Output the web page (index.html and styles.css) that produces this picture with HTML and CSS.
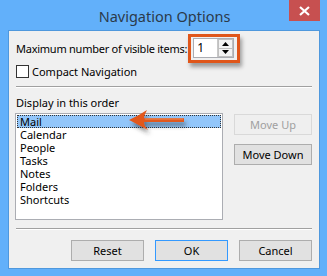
FILE: index.html
```html
<!DOCTYPE html>
<html>
<head>
<meta charset="utf-8">
<link rel="stylesheet" href="styles.css">
</head>
<body>
<div class="window">
  <div class="titlebar">
    <span></span>
    <div class="title">Navigation Options</div>
    <div class="close"><svg width="11" height="10" viewBox="0 0 11 10"><path d="M1 1 L10 9 M10 1 L1 9" stroke="#fff" stroke-width="2.2" fill="none"/></svg></div>
  </div>
  <div class="client">
    <div class="row-max">
      <span class="label max-label">Maximum number of visible items:</span>
      <div class="spin-highlight">
        <div class="spin">
          <span class="spin-value">1</span>
          <div class="spin-btns">
            <div class="spin-btn"><svg width="7" height="4" viewBox="0 0 7 4"><path d="M3.5 0 L7 4 L0 4 Z" fill="#000"/></svg></div>
            <div class="spin-btn"><svg width="7" height="4" viewBox="0 0 7 4"><path d="M0 0 L7 0 L3.5 4 Z" fill="#000"/></svg></div>
          </div>
        </div>
      </div>
    </div>
    <div class="row-check">
      <span class="checkbox"></span>
      <span class="label">Compact Navigation</span>
    </div>
    <div class="sep sep-top"></div>
    <div class="label order-label">Display in this order</div>
    <div class="order">
      <div class="listbox">
        <div class="item selected">Mail</div>
        <div class="item">Calendar</div>
        <div class="item">People</div>
        <div class="item">Tasks</div>
        <div class="item">Notes</div>
        <div class="item">Folders</div>
        <div class="item">Shortcuts</div>
        <svg class="arrow" width="80" height="36" viewBox="0 0 80 36">
          <defs>
            <filter id="sh" x="-20%" y="-40%" width="150%" height="200%">
              <feDropShadow dx="2" dy="4" stdDeviation="2" flood-color="#333" flood-opacity="0.55"/>
            </filter>
          </defs>
          <path filter="url(#sh)" d="M8 14 C14 11 20 8 26 4 C24 8 23 10 23 12.3 L63 12.3 L63 16 L23 16 C23 18 24 21 27 24 C20 20 14 17 8 14 Z" fill="#e2591b"/>
          <path d="M24 13 L62 13" stroke="#f08a50" stroke-width="1" />
        </svg>
      </div>
      <div class="side-btns">
        <div class="btn disabled">Move Up</div>
        <div class="btn">Move Down</div>
      </div>
    </div>
    <div class="sep sep-bottom"></div>
    <div class="footer">
      <div class="btn">Reset</div>
      <div class="btn default">OK</div>
      <div class="btn">Cancel</div>
    </div>
  </div>
</div>
</body>
</html>
```

FILE: styles.css
```css
* { box-sizing: border-box; }
html, body { margin: 0; padding: 0; }
body {
  width: 327px;
  height: 276px;
  overflow: hidden;
  font-family: "Noto Sans", "Open Sans", sans-serif;
  font-size: 11px;
  color: #000;
}
.window {
  width: 327px;
  height: 276px;
  background: #62b0fa;
  padding: 0 7px 7px 8px;
  display: flex;
  flex-direction: column;
}
.titlebar {
  height: 30px;
  display: grid;
  grid-template-columns: 1fr auto 1fr;
  align-items: start;
}
.title {
  font-size: 14.5px;
  color: #2b3a4a;
  line-height: 32px;
  margin-left: 1px;
}
.close {
  justify-self: end;
  width: 31px;
  height: 21px;
  background: #c75050;
  display: flex;
  align-items: center;
  justify-content: center;
}
.client {
  flex: 1;
  background: #f0f0f0;
  border: 1px solid #4f98dd;
  padding: 0 7px 0 6px;
  display: flex;
  flex-direction: column;
}
.label { white-space: nowrap; }
.row-max {
  display: flex;
  align-items: center;
  margin-top: 3px;
  height: 29px;
  padding-left: 1px;
}
.max-label {
  letter-spacing: -0.25px;
  margin-right: 1px;
}
.spin-highlight {
  width: 52px;
  height: 29px;
  border: 3px solid #e0561a;
  padding: 1px 3px 2px 2px;
  box-shadow: 2px 4px 4px rgba(0,0,0,0.35);
  background: #f0f0f0;
}
.spin {
  width: 41px;
  height: 20px;
  border: 1px solid #abadb3;
  background: #fff;
  display: flex;
  align-items: center;
  justify-content: space-between;
  padding: 0 0 0 3px;
}
.spin-value { font-size: 12px; line-height: 18px; }
.spin-btns {
  width: 16px;
  height: 18px;
  border-left: 1px solid #c8c8c8;
  display: flex;
  flex-direction: column;
  background: #f3f3f3;
}
.spin-btn {
  flex: 1;
  display: flex;
  align-items: center;
  justify-content: center;
  border: 1px solid #c0c0c0;
}
.spin-btn + .spin-btn { border-top: none; }
.row-check {
  display: flex;
  align-items: center;
  gap: 3px;
  margin-top: 2px;
  height: 13px;
  padding-left: 1px;
}
.checkbox {
  width: 13px;
  height: 13px;
  border: 1px solid #333;
  background: #fff;
}
.sep {
  height: 2px;
  border-top: 1px solid #a0a0a0;
  border-bottom: 1px solid #fff;
  margin-left: 1px;
}
.sep-top { margin-top: 8px; }
.order-label {
  margin-top: 7px;
  line-height: 15px;
  padding-left: 1px;
}
.order {
  margin-top: 3px;
  display: flex;
  gap: 11px;
  align-items: flex-start;
}
.listbox {
  position: relative;
  width: 208px;
  height: 107px;
  border: 1px solid #abadb3;
  background: #fff;
  padding: 1px;
}
.item {
  height: 13px;
  line-height: 11px;
  padding-left: 2px;
  border: 1px solid transparent;
  display: flex;
  align-items: center;
}
.item.selected {
  background: #92c6fa;
  border: 1px dotted #333;
}
.arrow {
  position: absolute;
  left: 105px;
  top: -8px;
}
.side-btns {
  display: flex;
  flex-direction: column;
  gap: 9px;
  margin-top: 1px;
}
.btn {
  width: 78px;
  height: 21px;
  background: #e1e1e1;
  border: 1px solid #adadad;
  display: flex;
  align-items: center;
  justify-content: center;
  white-space: nowrap;
}
.btn.disabled {
  background: #efefef;
  border-color: #d9d9d9;
  color: #a0a0a0;
}
.btn.default { border-color: #3399ff; }
.sep-bottom { margin-top: 8px; }
.footer {
  margin-top: 10px;
  display: flex;
  justify-content: flex-end;
  gap: 11px;
}
.footer .btn { width: 73px; }
```
